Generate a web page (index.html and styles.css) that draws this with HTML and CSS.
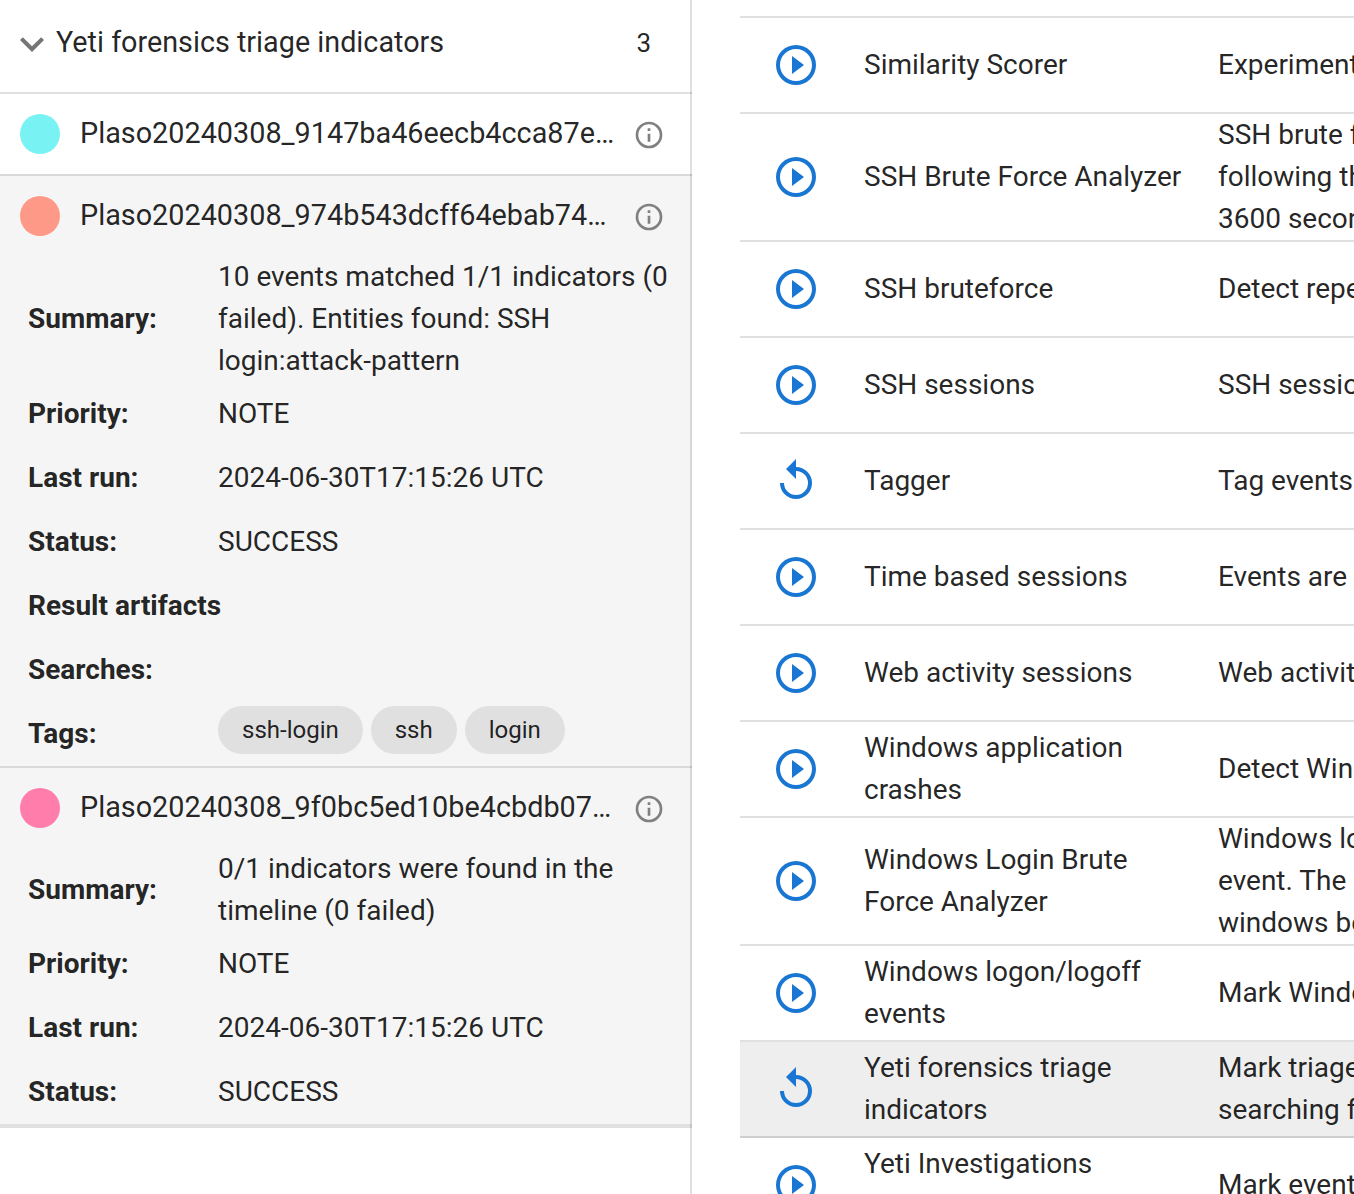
FILE: index.html
```
<!DOCTYPE html>
<html lang="en">
<head>
<meta charset="utf-8">
<title>Analyzers</title>
<link rel="stylesheet" href="styles.css">
</head>
<body>
<svg class="defs" aria-hidden="true">
  <symbol id="chevron" viewBox="0 0 24 24"><path d="M7.41,8.58L12,13.17L16.59,8.58L18,10L12,16L6,10L7.41,8.58Z"/></symbol>
  <symbol id="info" viewBox="0 0 24 24"><path d="M11,9H13V7H11M12,20C7.59,20 4,16.41 4,12C4,7.59 7.59,4 12,4C16.41,4 20,7.59 20,12C20,16.41 16.41,20 12,20M12,2A10,10 0 0,0 2,12A10,10 0 0,0 12,22A10,10 0 0,0 22,12A10,10 0 0,0 12,2M11,17H13V11H11V17Z"/></symbol>
  <symbol id="play" viewBox="0 0 24 24"><path d="M12,20C7.59,20 4,16.41 4,12C4,7.59 7.59,4 12,4C16.41,4 20,7.59 20,12C20,16.41 16.41,20 12,20M12,2A10,10 0 0,0 2,12A10,10 0 0,0 12,22A10,10 0 0,0 22,12A10,10 0 0,0 12,2M10,16.5L16,12L10,7.5V16.5Z"/></symbol>
  <symbol id="replay" viewBox="0 0 24 24"><path d="M12,5V1L7,6L12,11V7A6,6 0 0,1 18,13A6,6 0 0,1 12,19A6,6 0 0,1 6,13H4A8,8 0 0,0 12,21A8,8 0 0,0 20,13A8,8 0 0,0 12,5Z"/></symbol>
</svg>
<div class="app">
  <aside class="sidebar">
    <header class="group">
      <svg class="chevron"><use href="#chevron"/></svg>
      <span class="group-title">Yeti forensics triage indicators</span>
      <span class="count">3</span>
    </header>
    <section class="timeline">
      <div class="timeline-head"><i class="dot cyan"></i><span class="name">Plaso20240308_9147ba46eecb4cca87e…</span><svg class="info"><use href="#info"/></svg></div>
    </section>
    <section class="timeline open">
      <div class="timeline-head"><i class="dot salmon"></i><span class="name">Plaso20240308_974b543dcff64ebab74…</span><svg class="info"><use href="#info"/></svg></div>
      <dl class="details">
        <div class="detail text"><dt>Summary:</dt><dd>10 events matched 1/1 indicators (0<br>failed). Entities found: SSH<br>login:attack-pattern</dd></div>
        <div class="detail"><dt>Priority:</dt><dd>NOTE</dd></div>
        <div class="detail"><dt>Last run:</dt><dd>2024-06-30T17:15:26 UTC</dd></div>
        <div class="detail"><dt>Status:</dt><dd>SUCCESS</dd></div>
        <div class="detail"><dt>Result artifacts</dt></div>
        <div class="detail"><dt>Searches:</dt></div>
        <div class="detail"><dt>Tags:</dt><dd class="chips"><span class="chip">ssh-login</span><span class="chip">ssh</span><span class="chip">login</span></dd></div>
      </dl>
    </section>
    <section class="timeline open last">
      <div class="timeline-head"><i class="dot pink"></i><span class="name">Plaso20240308_9f0bc5ed10be4cbdb07…</span><svg class="info"><use href="#info"/></svg></div>
      <dl class="details">
        <div class="detail text"><dt>Summary:</dt><dd>0/1 indicators were found in the<br>timeline (0 failed)</dd></div>
        <div class="detail"><dt>Priority:</dt><dd>NOTE</dd></div>
        <div class="detail"><dt>Last run:</dt><dd>2024-06-30T17:15:26 UTC</dd></div>
        <div class="detail"><dt>Status:</dt><dd>SUCCESS</dd></div>
      </dl>
    </section>
  </aside>
  <main class="analyzers">
    <div class="row"><svg class="action"><use href="#play"/></svg><span>Similarity Scorer</span><span class="desc">Experimental</span></div>
    <div class="row"><svg class="action"><use href="#play"/></svg><span>SSH Brute Force Analyzer</span><span class="desc">SSH brute force<br>following the<br>3600 seconds</span></div>
    <div class="row"><svg class="action"><use href="#play"/></svg><span>SSH bruteforce</span><span class="desc">Detect repeated</span></div>
    <div class="row"><svg class="action"><use href="#play"/></svg><span>SSH sessions</span><span class="desc">SSH sessions</span></div>
    <div class="row"><svg class="action"><use href="#replay"/></svg><span>Tagger</span><span class="desc">Tag events</span></div>
    <div class="row"><svg class="action"><use href="#play"/></svg><span>Time based sessions</span><span class="desc">Events are</span></div>
    <div class="row"><svg class="action"><use href="#play"/></svg><span>Web activity sessions</span><span class="desc">Web activity</span></div>
    <div class="row"><svg class="action"><use href="#play"/></svg><span>Windows application<br>crashes</span><span class="desc">Detect Windows</span></div>
    <div class="row"><svg class="action"><use href="#play"/></svg><span>Windows Login Brute<br>Force Analyzer</span><span class="desc">Windows login<br>event. The<br>windows below</span></div>
    <div class="row"><svg class="action"><use href="#play"/></svg><span>Windows logon/logoff<br>events</span><span class="desc">Mark Windows</span></div>
    <div class="row selected"><svg class="action"><use href="#replay"/></svg><span>Yeti forensics triage<br>indicators</span><span class="desc">Mark triage<br>searching for</span></div>
    <div class="row"><svg class="action"><use href="#play"/></svg><span>Yeti Investigations<br>&nbsp;</span><span class="desc">Mark events</span></div>
  </main>
</div>
</body>
</html>
```
FILE: styles.css
```
* { box-sizing: border-box; }
body {
  margin: 0;
  background: #fff;
  color: rgba(0, 0, 0, .87);
  font: 28px/42px Roboto, sans-serif;
  overflow: hidden;
}
svg { fill: currentColor; flex: none; display: block; }
.defs { display: none; }
.app { display: flex; height: 1194px; overflow: hidden; }

.sidebar {
  width: 692px;
  flex: none;
  box-shadow: inset -2px 0 rgba(0, 0, 0, .12);
}
.group {
  display: flex;
  align-items: center;
  height: 94px;
  padding: 0 41px 6px 8px;
  border-bottom: 2px solid rgba(0, 0, 0, .12);
}
.chevron { width: 48px; height: 48px; color: #757575; margin-top: 2px; }
.group-title { flex: 1; font-size: 28.75px; margin-bottom: 2px; }
.count { font-size: 26px; }

.timeline { border-bottom: 2px solid rgba(0, 0, 0, .15); }
.timeline.last { border-bottom: 4px solid rgba(0, 0, 0, .12); }
.timeline.open { background: rgba(0, 0, 0, .04); background-clip: padding-box; }
.timeline-head { display: flex; align-items: center; height: 80px; padding: 0 27px 0 20px; }
.dot { width: 40px; height: 40px; border-radius: 50%; margin-right: 20px; }
.cyan { background: #78f2f2; }
.salmon { background: #ff9987; }
.pink { background: #ff7dab; }
.name { flex: 1; white-space: nowrap; font-size: 28.8px; margin-bottom: 2px; }
.info { width: 32px; height: 32px; color: #808080; margin-top: 2px; }

.details { margin: 0; }
.detail { display: flex; align-items: center; height: 64px; padding-left: 28px; }
.detail.text { height: auto; }
dt { width: 190px; flex: none; font-weight: 700; white-space: nowrap; }
dd { margin: 0; white-space: nowrap; }
.chips { display: flex; gap: 8px; padding-bottom: 8px; }
.chip {
  height: 48px;
  padding: 0 24px;
  border-radius: 24px;
  background: #e0e0e0;
  font-size: 24px;
  line-height: 48px;
}

.analyzers { flex: 1; min-width: 0; margin: 16px 0 0 48px; border-top: 2px solid #e0e0e0; }
.row {
  display: grid;
  grid-template-columns: 92px 354px 400px;
  align-items: center;
  min-height: 96px;
  padding-left: 32px;
  border-bottom: 2px solid #e0e0e0;
  white-space: nowrap;
}
.row.selected { background: #eee; border-bottom-color: #cfcfcf; }
.action { width: 48px; height: 48px; color: #1976d2; }
```
